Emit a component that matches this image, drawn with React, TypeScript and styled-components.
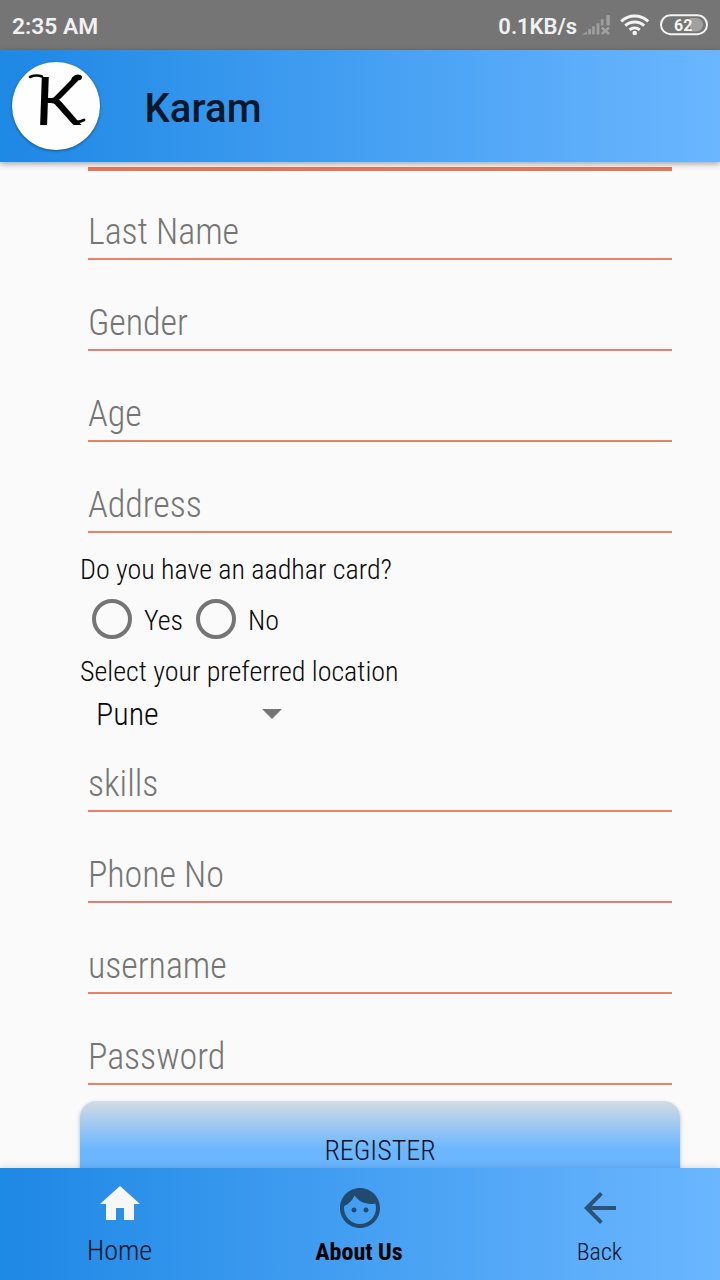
import React from "react";
import styled, { createGlobalStyle } from "styled-components";

const GlobalStyle = createGlobalStyle`
  * { box-sizing: border-box; }
  body { margin: 0; background: #fafafa; }
`;

const condensed = `"Roboto Condensed", Roboto, "Liberation Sans", sans-serif`;
const barGradient = "linear-gradient(90deg, #1e88e5 0%, #6bb6ff 100%)";

const Screen = styled.div`
  width: 720px;
  height: 1280px;
  display: flex;
  flex-direction: column;
  overflow: hidden;
  background: #fafafa;
  font-family: ${condensed};
  font-stretch: 75%;
  font-weight: 300;
  color: #080808;
`;

const StatusBar = styled.header`
  flex: none;
  height: 50px;
  padding: 2px 12px 0;
  display: flex;
  align-items: center;
  background: #757575;
  color: #f1f1f1;
  font-family: Roboto, sans-serif;
  font-stretch: 100%;
  font-weight: 600;
  font-size: 22.8px;
`;

const Clock = styled.span`
  flex: 1;
`;

const Speed = styled.span`
  font-size: 22px;
  letter-spacing: -0.05px;
`;

const StatusIcons = styled.svg`
  display: block;
  margin-left: 5px;
`;

const AppBar = styled.div`
  flex: none;
  position: relative;
  z-index: 1;
  height: 112px;
  padding: 0 12px;
  display: flex;
  align-items: center;
  background: ${barGradient};
  box-shadow: 0 2px 6px rgba(0, 0, 0, 0.35);
`;

const Logo = styled.div`
  position: relative;
  width: 88px;
  height: 88px;
  border-radius: 50%;
  background: #fefefe;
  box-shadow: 0 1px 3px rgba(0, 0, 0, 0.4);
  display: flex;
  justify-content: center;
  color: #000;
`;

const Monogram = styled.span`
  font: 400 67px/74px Lato, sans-serif;
  transform: translateX(2px) skewX(-2deg) scaleX(1.08);
`;

const Flourish = styled.svg`
  position: absolute;
  inset: 0;
`;

const Title = styled.h1`
  margin: 6px 0 0 44.5px;
  font-family: Roboto, sans-serif;
  font-stretch: 100%;
  font-weight: 500;
  font-size: 40px;
  line-height: 48px;
  letter-spacing: 0.1px;
  color: #06182a;
`;

const Form = styled.main`
  flex: 1;
  min-height: 0;
  padding: 0 40px 0 80px;
  display: flex;
  flex-direction: column;
  overflow: hidden;
`;

const FocusedLine = styled.div`
  flex: none;
  height: 4px;
  margin: 5px 8px 0;
  background: #e8775c;
`;

const Field = styled.div<{ $gap?: number }>`
  flex: none;
  height: ${(p) => p.$gap ?? 91}px;
  margin: 0 8px;
  padding-bottom: 4px;
  display: flex;
  align-items: flex-end;
  border-bottom: 2px solid #e87f66;
  color: #757575;
  font-size: 36px;
  line-height: 44px;
  letter-spacing: -0.05px;
`;

const Question = styled.div<{ $top: number }>`
  flex: none;
  margin-top: ${(p) => p.$top}px;
  font-size: 28px;
  line-height: 34px;
`;

const Options = styled.div`
  flex: none;
  height: 64px;
  padding-left: 12px;
  display: flex;
  align-items: center;
`;

const Option = styled.label`
  width: 104px;
  display: flex;
  align-items: center;
  gap: 12px;
  font-size: 28px;
  line-height: 34px;
`;

const OptionText = styled.span`
  padding-top: 3px;
`;

const Radio = styled.span`
  width: 40px;
  height: 40px;
  border: 4px solid #757575;
  border-radius: 50%;
`;

const Select = styled.div`
  flex: none;
  width: 202px;
  height: 48px;
  padding: 2px 0 0 16px;
  display: flex;
  align-items: center;
  justify-content: space-between;
  font-size: 32px;
`;

const Caret = styled.span`
  border: 10px solid transparent;
  border-top-color: #757575;
  border-bottom: 0;
`;

const Register = styled.button`
  flex: none;
  height: 96px;
  margin-top: 16px;
  padding: 2px 0 0;
  border: 0;
  border-radius: 16px;
  background: linear-gradient(180deg, #d3dce2 0%, #6bb6ff 50%, #6bb6ff 100%);
  box-shadow: 0 2px 4px rgba(0, 0, 0, 0.25);
  font-family: inherit;
  font-stretch: 75%;
  font-weight: 300;
  font-size: 28px;
  color: #06121f;
`;

const NavBar = styled.nav`
  flex: none;
  position: relative;
  z-index: 1;
  height: 112px;
  display: flex;
  background: ${barGradient};
  box-shadow: 0 0 8px rgba(0, 0, 0, 0.16);
`;

const NavItem = styled.div<{ $raised?: boolean }>`
  flex: 1;
  padding-top: ${(p) => (p.$raised ? 12 : 16)}px;
  display: flex;
  flex-direction: column;
  align-items: center;
  gap: ${(p) => (p.$raised ? 5 : 2)}px;
`;

const NavIcon = styled.svg`
  width: 48px;
  height: 48px;
  display: block;
`;

const NavLabel = styled.span<{ $size: number; $bold?: boolean }>`
  height: 36px;
  line-height: 36px;
  font-size: ${(p) => p.$size}px;
  font-weight: ${(p) => (p.$bold ? 700 : 300)};
  color: ${(p) => (p.$bold ? "#000" : "#06121f")};
  margin-right: ${(p) => (p.$bold ? 2 : 1)}px;
`;

export default function App() {
  return (
    <>
      <GlobalStyle />
      <Screen>
        <StatusBar>
          <Clock>2:35 AM</Clock>
          <Speed>0.1KB/s</Speed>
          <StatusIcons width="126" height="26" viewBox="0 0 126 26">
            <path
              fill="#a0a0a0"
              d="M0 21.5L5 18.5V21.5ZM6.3 16H9V21.5H6.3ZM10.2 13.3H12.8V21.5H10.2ZM14.6 10.2H17.4V21.5H14.6ZM18.8 6.2H21.6V12.5H18.8ZM24.4 2H27.8V12.5H24.4Z"
            />
            <path d="M19.8 14.5L27 21M27 14.5L19.8 21" stroke="#a0a0a0" strokeWidth="2.4" />
            <g fill="none" stroke="#f4f4f4" strokeWidth="3">
              <path d="M39.2 8.3A20 20 0 0 1 66.2 8.3" />
              <path d="M43.3 12.6A14 14 0 0 1 62.1 12.6" />
              <path d="M47.6 16.9A8 8 0 0 1 57.8 16.9" />
            </g>
            <circle cx="52.7" cy="20" r="2.3" fill="#f4f4f4" />
            <rect x="79" y="2.2" width="46" height="19" rx="9.500" fill="none" stroke="#f4f4f4" strokeWidth="2" />
            <path d="M108 5h6.500a6.700 6.700 0 0 1 0 13.400H108z" fill="#a0a0a0" />
            <text x="101.300" y="17.500" textAnchor="middle" fill="#f4f4f4" fontSize="16" fontWeight="700">
              62
            </text>
          </StatusIcons>
        </StatusBar>
        <AppBar>
          <Logo>
            <Monogram>K</Monogram>
            <Flourish width="88" height="88" viewBox="0 0 88 88" fill="none" stroke="#000" strokeLinecap="round">
              <path d="M18 15Q24 12.500 30 14.500" strokeWidth="2.500" />
              <path d="M62 17Q65 14 67.500 15.500" strokeWidth="5" />
              <path d="M61 59Q66 61 72 58" strokeWidth="2.800" />
            </Flourish>
          </Logo>
          <Title>Karam</Title>
        </AppBar>
        <Form>
          <FocusedLine />
          <Field $gap={89}>Last Name</Field>
          <Field>Gender</Field>
          <Field>Age</Field>
          <Field>Address</Field>
          <Question $top={20}>Do you have an aadhar card?</Question>
          <Options>
            <Option>
              <Radio />
              <OptionText>Yes</OptionText>
            </Option>
            <Option>
              <Radio />
              <OptionText>No</OptionText>
            </Option>
          </Options>
          <Question $top={4}>Select your preferred location</Question>
          <Select>
            Pune
            <Caret />
          </Select>
          <Field $gap={75}>skills</Field>
          <Field>Phone No</Field>
          <Field>username</Field>
          <Field>Password</Field>
          <Register>REGISTER</Register>
        </Form>
        <NavBar>
          <NavItem $raised>
            <NavIcon viewBox="0 0 24 24" fill="#f7f7f7">
              <path d="M10 20v-6h4v6h5v-8h3L12 3 2 12h3v8z" />
            </NavIcon>
            <NavLabel $size={28}>Home</NavLabel>
          </NavItem>
          <NavItem>
            <NavIcon viewBox="0 0 24 24" fill="#204a70">
              <path d="M9 11.75c-.69 0-1.25.56-1.25 1.25s.56 1.25 1.25 1.25 1.25-.56 1.25-1.25-.56-1.25-1.25-1.25zm6 0c-.69 0-1.25.56-1.25 1.25s.56 1.25 1.25 1.25 1.25-.56 1.25-1.25-.56-1.25-1.25-1.25zM12 2C6.48 2 2 6.48 2 12s4.48 10 10 10 10-4.48 10-10S17.52 2 12 2zm0 18c-4.41 0-8-3.59-8-8 0-.29.02-.58.05-.86 2.36-1.05 4.23-2.98 5.21-5.37C11.07 8.33 14.05 10 17.42 10c.78 0 1.53-.09 2.25-.26.21.71.33 1.47.33 2.26 0 4.41-3.59 8-8 8z" />
            </NavIcon>
            <NavLabel $size={24} $bold>About Us</NavLabel>
          </NavItem>
          <NavItem>
            <NavIcon viewBox="0 0 24 24" fill="#2b5278">
              <path d="M20 11H7.83l5.59-5.59L12 4l-8 8 8 8 1.41-1.41L7.83 13H20v-2z" />
            </NavIcon>
            <NavLabel $size={24}>Back</NavLabel>
          </NavItem>
        </NavBar>
      </Screen>
    </>
  );
}
